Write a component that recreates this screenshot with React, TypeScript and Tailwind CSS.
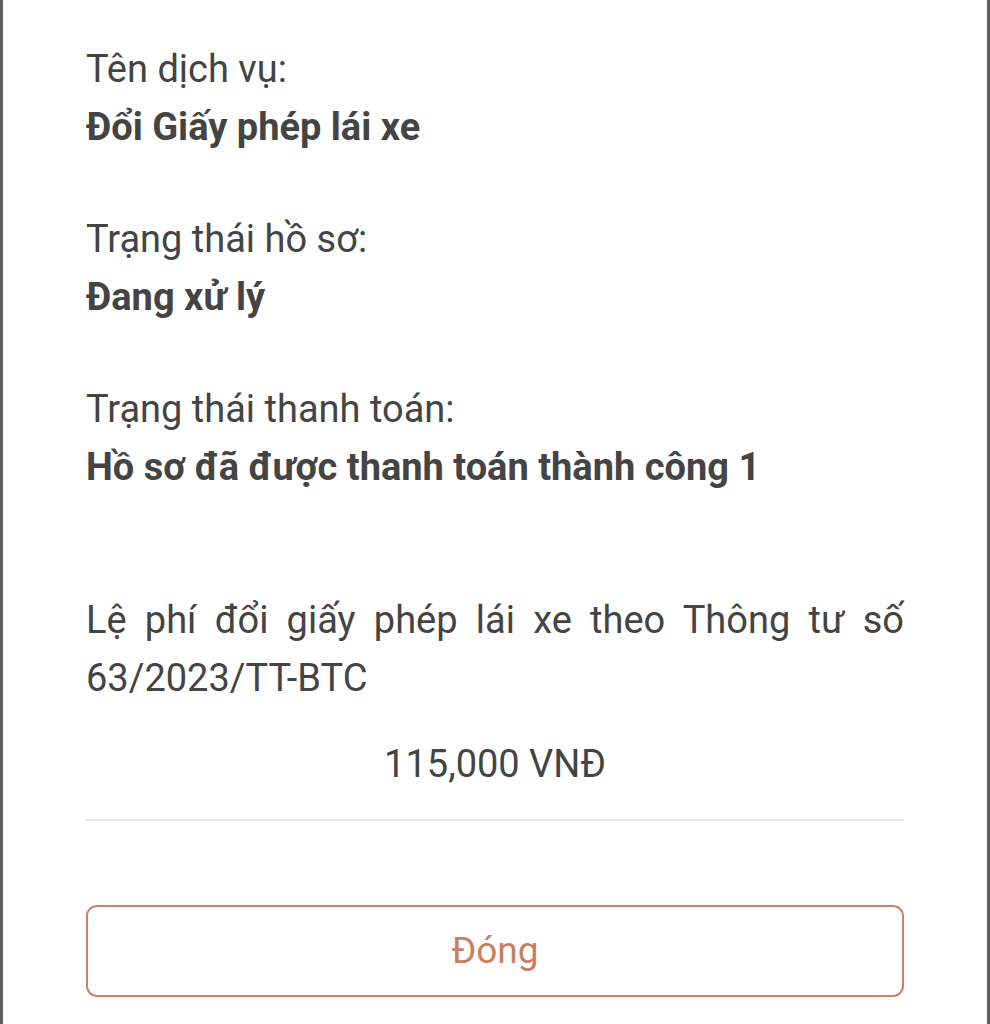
import React from 'react'

const InfoBlock = ({ label, value }: { label: string; value: string }) => {
  return (
    <div className="flex flex-col">
      <p className="leading-[58px]">{label}</p>
      <p className="font-bold leading-[58px]">{value}</p>
    </div>
  )
}

const App = () => {
  return (
    <div
      className="h-[1024px] w-[990px] overflow-hidden border-x-[3px] border-[#5f5f5f] bg-white text-[38px] text-[#444444]"
      style={{ fontFamily: 'Roboto, "Noto Sans", sans-serif' }}
    >
      <div className="flex flex-col px-[83px] pt-[40px]">
        {/* info blocks */}
        <div className="flex flex-col gap-[54px]">
          <InfoBlock label="Tên dịch vụ:" value="Đổi Giấy phép lái xe" />
          <InfoBlock label="Trạng thái hồ sơ:" value="Đang xử lý" />
          <InfoBlock label="Trạng thái thanh toán:" value="Hồ sơ đã được thanh toán thành công 1" />
        </div>

        {/* fee */}
        <p className="mt-[95px] text-justify leading-[58px]">
          Lệ phí đổi giấy phép lái xe theo Thông tư số 63/2023/TT-BTC
        </p>
        <p className="mt-[28px] text-center leading-[58px]">115,000 VNĐ</p>

        <div className="mt-[26px] h-[2px] bg-[#e3e3e3]" />

        <button className="mt-[84px] flex h-[92px] items-center justify-center rounded-[11px] border-[2px] border-[#c8856a] text-[37px] font-normal text-[#c7805f]">
          Đóng
        </button>
      </div>
    </div>
  )
}

export default App
